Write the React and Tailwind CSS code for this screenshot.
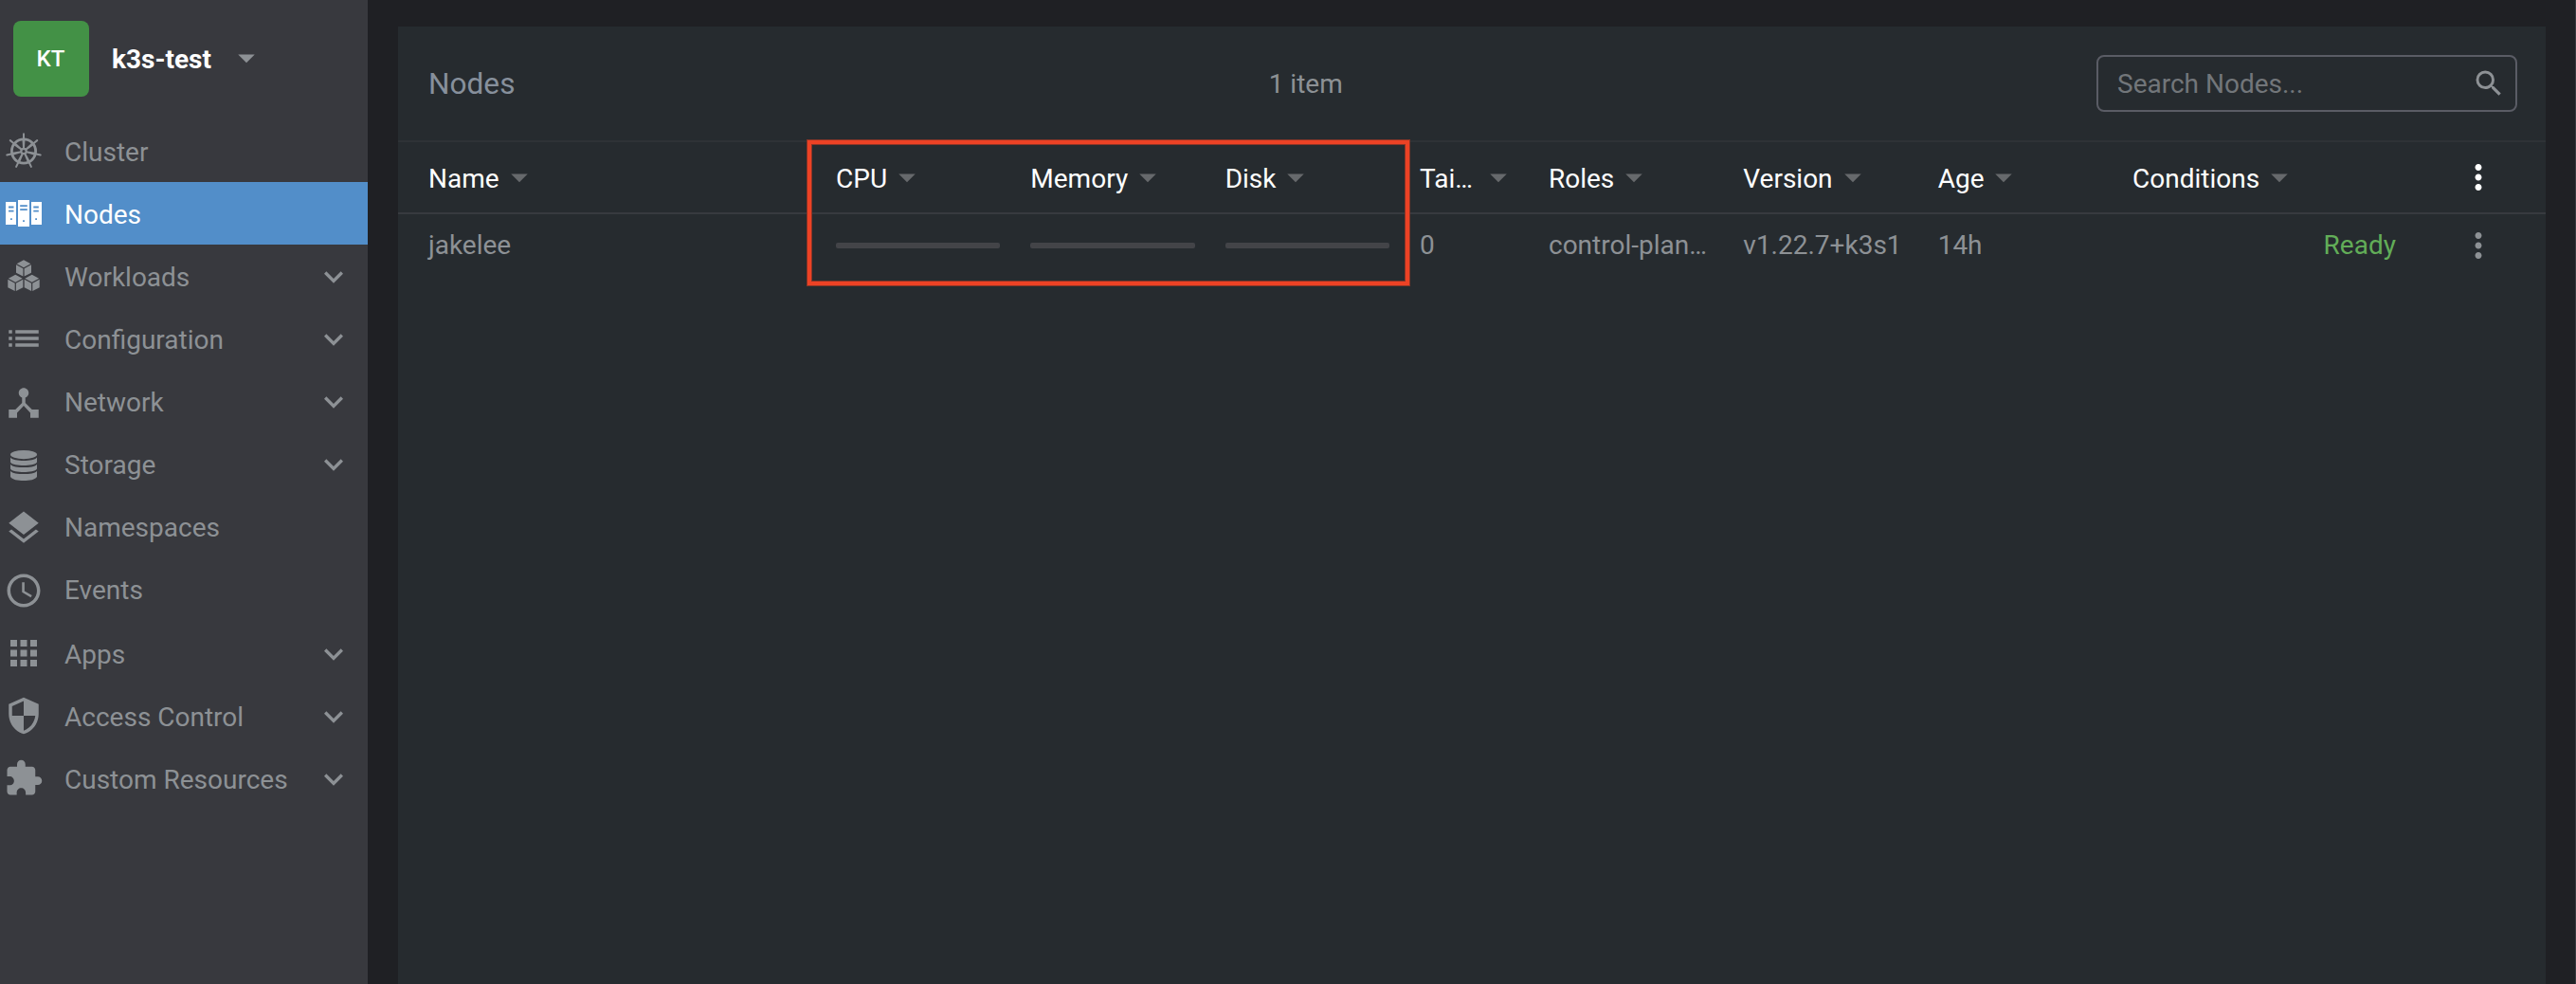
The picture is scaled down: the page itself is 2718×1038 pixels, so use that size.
import {
  MdArrowDropDown,
  MdApps,
  MdDeviceHub,
  MdExpandMore,
  MdExtension,
  MdLayers,
  MdList,
  MdMoreVert,
  MdSearch,
  MdSecurity,
  MdAccessTime,
} from "react-icons/md";

function HelmWheel({ className }) {
  const angles = [0, 1, 2, 3, 4, 5, 6].map((i) => (i * 360) / 7);
  return (
    <svg viewBox="0 0 42 42" className={className} fill="none" stroke="currentColor">
      <circle cx="21" cy="21.5" r="12.6" strokeWidth="2.8" />
      <circle cx="21" cy="21.5" r="2.7" strokeWidth="2.2" />
      {angles.map((a) => (
        <g key={a} transform={`rotate(${a} 21 21.5)`}>
          <path d="M21 9V3.3" strokeWidth="2" strokeLinecap="round" />
          <path d="M19.5 9.5h3l-.6 9.5h-1.8z" fill="currentColor" stroke="none" />
        </g>
      ))}
    </svg>
  );
}

function Servers({ className }) {
  return (
    <svg viewBox="0 0 42 42" className={className} fill="currentColor">
      <path
        fillRule="evenodd"
        d="M2 9h11v24H2zM5 13.6h5.5v1.8H5zM5 17.8h5.5v1.8H5zM7 26.2h1.8v1.8H7zM15 7h12v28H15zM17.2 12.2h7.6v1.8h-7.6zM17.2 16.2h7.6V18h-7.6zM20.1 28.2h1.8V30h-1.8zM29 9h11v24H29zM31.3 13.6h5.5v1.8h-5.5zM31.3 17.8h5.5v1.8h-5.5zM33.2 26.2H35v1.8h-1.8z"
      />
    </svg>
  );
}

function Cube({ x, y }) {
  return (
    <g transform={`translate(${x} ${y})`}>
      <path d="M0 0l7.4 3.9L0 7.9l-7.4-4z" />
      <path d="M-8 4.9l7.4 4v8.4L-8 13.4z" />
      <path d="M8 4.9l-7.4 4v8.4L8 13.4z" />
    </g>
  );
}

function Cubes({ className }) {
  return (
    <svg viewBox="0 0 42 42" className={className} fill="currentColor">
      <Cube x={21} y={4.3} />
      <Cube x={12.3} y={19.8} />
      <Cube x={29.7} y={19.8} />
    </svg>
  );
}

function Disks({ className }) {
  return (
    <svg viewBox="0 0 42 42" className={className} fill="currentColor">
      <ellipse cx="21" cy="9.6" rx="14" ry="4.6" />
      <path d="M7 12.4c2 2.6 8 3.5 14 3.5s12-.9 14-3.5v5.2c-1.5 2.6-8 3.5-14 3.5s-12.5-.9-14-3.5z" />
      <path d="M7 19.700c2 2.600 8 3.400 14 3.400s12-.8 14-3.400v4.900c-1.500 2.600-8 3.500-14 3.500s-12.500-.9-14-3.500z" />
      <path d="M7 26.700c2 2.600 8 3.400 14 3.400s12-.8 14-3.400v6c-1.500 3.300-8 4.300-14 4.300s-12.500-1-14-4.300z" />
    </svg>
  );
}

const menu = [
  { label: "Cluster", Icon: HelmWheel },
  { label: "Nodes", Icon: Servers, active: true },
  { label: "Workloads", Icon: Cubes, expandable: true },
  { label: "Configuration", Icon: MdList, expandable: true },
  { label: "Network", Icon: MdDeviceHub, expandable: true, shift: "mt-[3px]" },
  { label: "Storage", Icon: Disks, expandable: true, shift: "mt-[3px]" },
  { label: "Namespaces", Icon: MdLayers, shift: "mt-[3px]" },
  { label: "Events", Icon: MdAccessTime, shift: "mt-[4px]" },
  { label: "Apps", Icon: MdApps, expandable: true, gap: "mt-[2px]" },
  { label: "Access Control", Icon: MdSecurity, expandable: true },
  { label: "Custom Resources", Icon: MdExtension, expandable: true },
];

function MenuItem({ label, Icon, active, expandable, shift = "", gap = "" }) {
  return (
    <li
      className={`flex h-[66px] items-center pl-1 pr-4 ${gap} ${
        active ? "bg-[#528ec9] text-white" : "text-[#8d9195]"
      }`}
    >
      <Icon className={`size-[42px] shrink-0 ${shift}`} />
      <span className="ml-[22px] mt-[4px] flex-1 whitespace-nowrap">{label}</span>
      {expandable && <MdExpandMore className="mt-px size-10 shrink-0" />}
    </li>
  );
}

function Sidebar() {
  return (
    <aside className="w-[388px] shrink-0 bg-[#38393e]">
      <div className="flex h-[126px] items-start pl-[14px] pt-[22px]">
        <div className="flex size-20 items-center justify-center rounded-lg bg-[#439146] pr-px text-2xl font-medium text-white">
          KT
        </div>
        <div className="ml-6 mt-px flex h-20 items-center font-bold text-white">k3s-test</div>
        <MdArrowDropDown className="ml-4 mt-[18px] size-[42px] text-[#8d9195]" />
      </div>
      <ul>
        {menu.map((item) => (
          <MenuItem key={item.label} {...item} />
        ))}
      </ul>
    </aside>
  );
}

const grid =
  "grid grid-cols-[446px_205.33px_205.33px_205.34px_136px_205.33px_205.33px_205.34px_310px_142px] items-center";
const columns = ["Name", "CPU", "Memory", "Disk", "Tai…", "Roles", "Version", "Age", "Conditions"];

function HeaderCell({ label, first }) {
  return (
    <div className={`flex min-w-0 items-center pr-4 ${first ? "pl-8" : "pl-4"}`}>
      <span className={`mt-[3px] whitespace-nowrap ${label === "Tai…" ? "w-[62px]" : ""}`}>{label}</span>
      <MdArrowDropDown className="size-[42px] shrink-0 text-[#66696c]" />
    </div>
  );
}

function Bar() {
  return (
    <div className="px-4">
      <div className="h-1.5 rounded-[2px] bg-[#434448]" />
    </div>
  );
}

function NodesTable() {
  return (
    <div className="relative">
      <div className={`${grid} h-[78px] border-y-2 border-t-[#2e3236] border-b-[#373a3f] text-white`}>
        {columns.map((label, i) => (
          <HeaderCell key={label} label={label} first={i === 0} />
        ))}
        <MdMoreVert className="size-[42px] justify-self-center" />
      </div>
      <div className={`${grid} h-[66px] text-[#8d9195]`}>
        <div className="truncate pl-8 pr-4">jakelee</div>
        <Bar />
        <Bar />
        <Bar />
        <div className="px-4">0</div>
        <div className="whitespace-nowrap pl-4">control-plan…</div>
        <div className="whitespace-nowrap pl-4">v1.22.7+k3s1</div>
        <div className="px-4">14h</div>
        <div className="px-4 text-right text-[#62ad58]">Ready</div>
        <MdMoreVert className="size-[42px] justify-self-center" />
      </div>
      <div className="absolute left-[432px] top-0 h-[153px] w-[635px] border-4 border-[#ec4225] shadow-[0_0_0_1px_#8a3527,inset_0_0_0_1px_#8a3527]" />
    </div>
  );
}

export default function App() {
  return (
    <div className="flex h-[1038px] w-[2718px] overflow-hidden border-r border-[#38393e] bg-[#1f2024] font-[Roboto,sans-serif] text-[28px] leading-[42px]">
      <Sidebar />
      <main className="ml-8 mt-7 w-[2266px] bg-[#262b2f]">
        <header className="flex h-[120px] items-center pl-8 pr-[30px]">
          <h1 className="mt-[2px] text-[31.6px] text-[#87909c]">Nodes</h1>
          <span className="ml-auto mr-auto mt-[2px] text-[#8d9195]">1 item</span>
          <div className="flex h-[60px] w-[444px] items-center justify-between rounded-lg border-2 border-[#5a5c65] pl-5 pr-[10px]">
            <span className="mt-[2px] text-[#72767a]">Search Nodes...</span>
            <MdSearch className="size-9 text-[#8d9195]" />
          </div>
        </header>
        <NodesTable />
      </main>
    </div>
  );
}
